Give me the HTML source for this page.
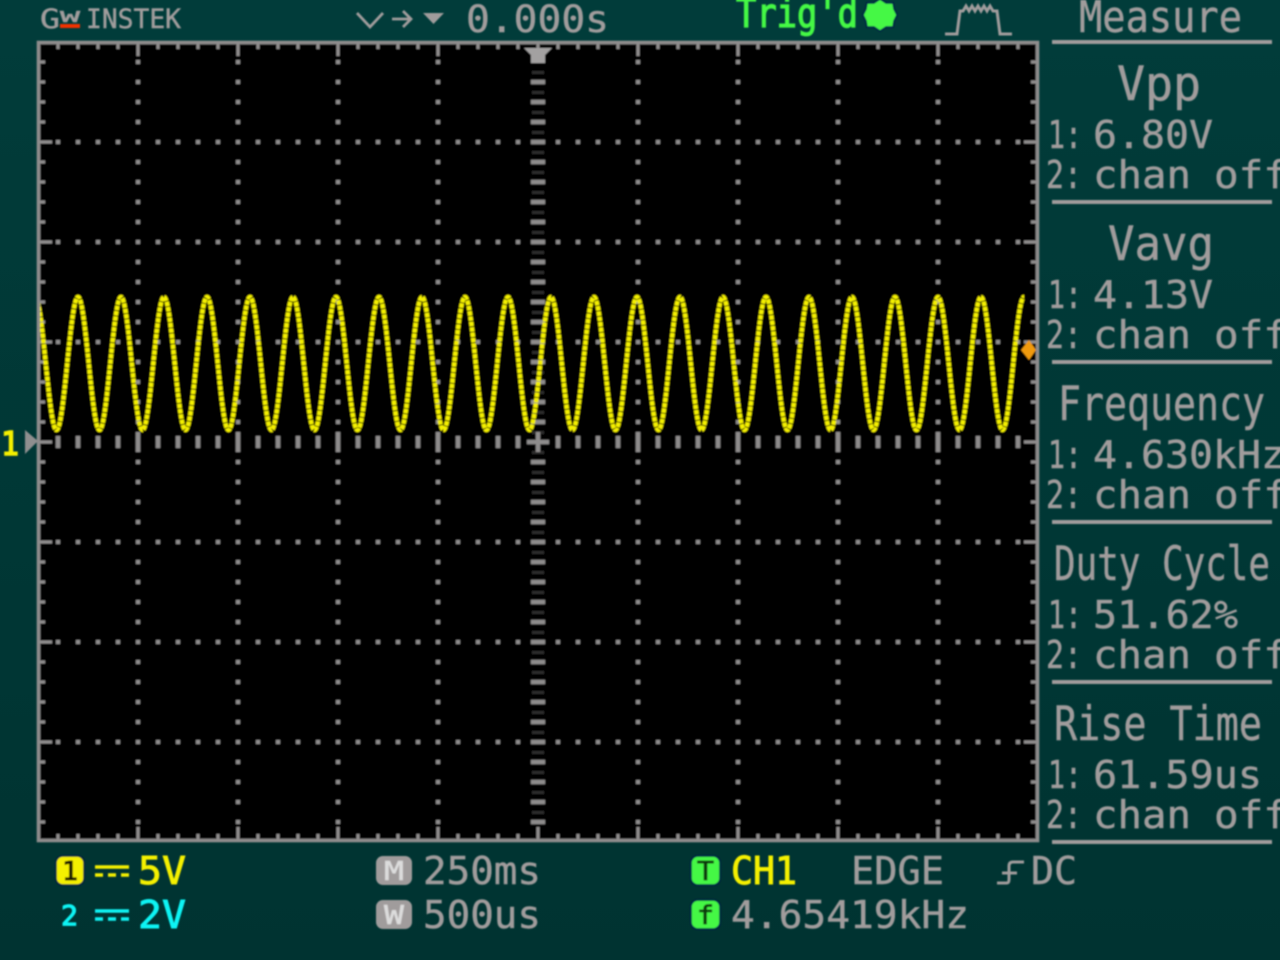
<!DOCTYPE html>
<html><head><meta charset="utf-8"><title>Oscilloscope</title>
<style>
html,body{margin:0;padding:0;background:#013836;width:1280px;height:960px;overflow:hidden}
svg{display:block}
text{font-family:"DejaVu Sans Mono","Liberation Mono",monospace;fill:#a09c9c;stroke:#a09c9c;stroke-width:.45}
.y{fill:#f4f000;stroke:#f4f000}.c{fill:#10f4f4;stroke:#10f4f4}.g{fill:#44f844;stroke:#44f844}
.m{font-size:38px}.t{font-size:47px}.b{font-size:38px}
</style></head><body>
<svg width="1280" height="960" viewBox="0 0 1280 960" xmlns="http://www.w3.org/2000/svg">
<defs>
<linearGradient id="bg" x1="0" y1="0" x2="0" y2="1"><stop offset="0" stop-color="#013c3a"/><stop offset="1" stop-color="#003331"/></linearGradient>
<clipPath id="scr"><rect x="40" y="44" width="996" height="795"/></clipPath>
<filter id="bl" x="-2%" y="-2%" width="104%" height="104%"><feGaussianBlur stdDeviation="0.7"/></filter>
</defs>
<rect width="1280" height="960" fill="url(#bg)"/>
<g filter="url(#bl)">
<rect x="38" y="42" width="1000" height="799" fill="#000"/>
<g stroke="#8e8c8c" fill="none">
<g stroke-width="4" stroke-dasharray="4 16">
<path d="M56 142H1030M56 242H1030M56 342H1030M56 542H1030M56 642H1030M56 742H1030"/>
<path d="M138 60V830M238 60V830M338 60V830M438 60V830M638 60V830M738 60V830M838 60V830M938 60V830"/>
</g>
<g stroke-width="4.5">
<path d="M58 436V448M78 436V448M98 436V448M118 436V448M158 436V448M178 436V448M198 436V448M218 436V448M258 436V448M278 436V448M298 436V448M318 436V448M358 436V448M378 436V448M398 436V448M418 436V448M458 436V448M478 436V448M498 436V448M518 436V448M558 436V448M578 436V448M598 436V448M618 436V448M658 436V448M678 436V448M698 436V448M718 436V448M758 436V448M778 436V448M798 436V448M818 436V448M858 436V448M878 436V448M898 436V448M918 436V448M958 436V448M978 436V448M998 436V448M1018 436V448"/>
<path d="M138 432V452M238 432V452M338 432V452M438 432V452M638 432V452M738 432V452M838 432V452M938 432V452"/>
</g>
<path stroke-width="4.5" d="M527 442H549M538 432V452"/>
<path stroke-width="4.5" d="M531 82H545M531 102H545M531 122H545M531 142H545M531 162H545M531 182H545M531 202H545M531 222H545M531 242H545M531 262H545M531 282H545M531 302H545M531 322H545M531 342H545M531 362H545M531 382H545M531 402H545M531 422H545M531 462H545M531 482H545M531 502H545M531 522H545M531 542H545M531 562H545M531 582H545M531 602H545M531 622H545M531 642H545M531 662H545M531 682H545M531 702H545M531 722H545M531 742H545M531 762H545M531 782H545M531 802H545M531 822H545"/>
<path stroke-width="12" stroke-dasharray="3 17" opacity=".3" d="M538 71V830"/>
<rect x="38.500" y="42.500" width="999" height="798" stroke-width="3.6"/>
<path stroke-width="6" stroke-dasharray="3 17" d="M56.500 46H1036"/>
<path stroke-width="6" stroke-dasharray="3 17" d="M56.500 837H1036"/>
<path stroke-width="6" stroke-dasharray="3 17" d="M42 60.500V838"/>
<path stroke-width="6" stroke-dasharray="3 17" d="M1034 60.500V838"/>
<path stroke-width="14" stroke-dasharray="3 97" d="M136.500 49H1036"/>
<path stroke-width="14" stroke-dasharray="3 97" d="M136.500 834H1036"/>
<path stroke-width="14" stroke-dasharray="3 97" d="M45 140.500V838"/>
<path stroke-width="14" stroke-dasharray="3 97" d="M1031 140.500V838"/>
</g>
<path d="M524 48H552L545 55V63H531V55Z" fill="#a3a1a1"/>
<path clip-path="url(#scr)" fill="none" stroke="#f4f000" stroke-width="4.4" stroke-linejoin="round" stroke-dasharray="4.500 .9" d="M35 297c7.830 0 13.670 133 21.500 133s13.670-133 21.500-133 13.670 133 21.500 133 13.670-133 21.500-133 13.670 133 21.500 133 13.670-133 21.500-133 13.670 133 21.500 133 13.670-133 21.500-133 13.670 133 21.500 133 13.670-133 21.500-133 13.670 133 21.500 133 13.670-133 21.500-133 13.670 133 21.500 133 13.670-133 21.500-133 13.670 133 21.500 133 13.670-133 21.500-133 13.670 133 21.500 133 13.670-133 21.500-133 13.670 133 21.500 133 13.670-133 21.500-133 13.670 133 21.500 133 13.670-133 21.500-133 13.670 133 21.500 133 13.670-133 21.500-133 13.670 133 21.500 133 13.670-133 21.500-133 13.670 133 21.500 133 13.670-133 21.500-133 13.670 133 21.500 133 13.670-133 21.500-133 13.670 133 21.500 133 13.670-133 21.500-133 13.670 133 21.500 133 13.670-133 21.500-133 13.670 133 21.500 133 13.670-133 21.500-133 13.670 133 21.500 133 13.670-133 21.500-133 13.670 133 21.500 133 13.670-133 21.500-133 13.670 133 21.500 133 13.670-133 21.500-133 13.670 133 21.500 133 13.670-133 21.500-133 13.670 133 21.500 133 13.670-133 21.500-133"/>
<path d="M1021 350L1029 340 1036 350 1029 360Z" fill="#f09a10"/>
<path d="M25 430L38 441 25 454V443Z" fill="#8f8f8f"/>
<text x="1" y="455" class="y" font-size="33" textLength="18" lengthAdjust="spacingAndGlyphs" style="stroke-width:1.6">1</text>

<text x="40" y="28" font-size="27" textLength="20" lengthAdjust="spacingAndGlyphs">G</text>
<text x="60" y="22" font-size="15" textLength="20" lengthAdjust="spacingAndGlyphs">W</text>
<rect x="60" y="24" width="20" height="4" fill="#f03000"/>
<text x="86" y="28" font-size="27" textLength="95" lengthAdjust="spacingAndGlyphs">INSTEK</text>
<path d="M357 13L370 27 383 13M392 19H411M403 11L411 19 403 27" fill="none" stroke="#a09c9c" stroke-width="2.8"/>
<path d="M423 13H444L433.500 24Z" fill="#a09c9c"/>
<text x="466" y="32" font-size="37" textLength="143" lengthAdjust="spacingAndGlyphs">0.000s</text>
<text x="736" y="27" class="g" font-size="40" textLength="122" lengthAdjust="spacingAndGlyphs" style="stroke-width:1.3">Trig'd</text>
<path d="M880 -1L886 3 893 3 894 9 897 15 894 21 893 27 886 27 880 31 874 27 867 27 866 21 863 15 866 9 867 3 874 3Z" fill="#44f844" stroke="#001a4a" stroke-width="1.5"/>
<path d="M945 34H957L960 11 963 11 966 6 969 11 972 6 975 11 978 6 981 11 984 6 987 11 990 6 993 11 997 11 1000 34H1012" fill="none" stroke="#a09c9c" stroke-width="3"/>

<text x="1079" y="32" font-size="44" textLength="163" lengthAdjust="spacingAndGlyphs">Measure</text>
<g fill="#a09c9c"><rect x="1052" y="40" width="220" height="4"/><rect x="1052" y="200" width="220" height="4"/><rect x="1052" y="360" width="220" height="4"/><rect x="1052" y="520" width="220" height="4"/><rect x="1052" y="680" width="220" height="4"/><rect x="1052" y="840" width="220" height="4"/></g>

<text x="1117" y="100" class="t" textLength="84" lengthAdjust="spacingAndGlyphs">Vpp</text>
<text x="1048" y="148" class="m" textLength="34" lengthAdjust="spacingAndGlyphs">1:</text><text x="1093" y="148" class="m" textLength="120" lengthAdjust="spacingAndGlyphs">6.80V</text>
<text x="1046" y="188" class="m" textLength="36" lengthAdjust="spacingAndGlyphs">2:</text><text x="1093" y="188" class="m" textLength="98" lengthAdjust="spacingAndGlyphs">chan</text><text x="1214" y="188" class="m" textLength="74" lengthAdjust="spacingAndGlyphs">off</text>
<text x="1108" y="260" class="t" textLength="106" lengthAdjust="spacingAndGlyphs">Vavg</text>
<text x="1048" y="308" class="m" textLength="34" lengthAdjust="spacingAndGlyphs">1:</text><text x="1093" y="308" class="m" textLength="120" lengthAdjust="spacingAndGlyphs">4.13V</text>
<text x="1046" y="348" class="m" textLength="36" lengthAdjust="spacingAndGlyphs">2:</text><text x="1093" y="348" class="m" textLength="98" lengthAdjust="spacingAndGlyphs">chan</text><text x="1214" y="348" class="m" textLength="74" lengthAdjust="spacingAndGlyphs">off</text>
<text x="1058" y="420" class="t" textLength="207" lengthAdjust="spacingAndGlyphs">Frequency</text>
<text x="1048" y="468" class="m" textLength="34" lengthAdjust="spacingAndGlyphs">1:</text><text x="1093" y="468" class="m" textLength="192" lengthAdjust="spacingAndGlyphs">4.630kHz</text>
<text x="1046" y="508" class="m" textLength="36" lengthAdjust="spacingAndGlyphs">2:</text><text x="1093" y="508" class="m" textLength="98" lengthAdjust="spacingAndGlyphs">chan</text><text x="1214" y="508" class="m" textLength="74" lengthAdjust="spacingAndGlyphs">off</text>
<text x="1054" y="580" class="t" textLength="216" lengthAdjust="spacingAndGlyphs">Duty Cycle</text>
<text x="1048" y="628" class="m" textLength="34" lengthAdjust="spacingAndGlyphs">1:</text><text x="1093" y="628" class="m" textLength="145" lengthAdjust="spacingAndGlyphs">51.62%</text>
<text x="1046" y="668" class="m" textLength="36" lengthAdjust="spacingAndGlyphs">2:</text><text x="1093" y="668" class="m" textLength="98" lengthAdjust="spacingAndGlyphs">chan</text><text x="1214" y="668" class="m" textLength="74" lengthAdjust="spacingAndGlyphs">off</text>
<text x="1054" y="740" class="t" textLength="208" lengthAdjust="spacingAndGlyphs">Rise Time</text>
<text x="1048" y="788" class="m" textLength="34" lengthAdjust="spacingAndGlyphs">1:</text><text x="1093" y="788" class="m" textLength="169" lengthAdjust="spacingAndGlyphs">61.59us</text>
<text x="1046" y="828" class="m" textLength="36" lengthAdjust="spacingAndGlyphs">2:</text><text x="1093" y="828" class="m" textLength="98" lengthAdjust="spacingAndGlyphs">chan</text><text x="1214" y="828" class="m" textLength="74" lengthAdjust="spacingAndGlyphs">off</text>

<rect x="56" y="856" width="28" height="29" rx="7" fill="#f4f000" stroke="#001a4a" stroke-width="1.5"/>
<text x="62" y="880" font-size="26" textLength="16" lengthAdjust="spacingAndGlyphs" style="fill:#1a1a00;stroke:#1a1a00;stroke-width:1">1</text>
<path d="M95 867H129" stroke="#f4f000" stroke-width="3.4"/>
<path d="M95 875H129" stroke="#f4f000" stroke-width="3.4" stroke-dasharray="8 5"/>
<text x="138" y="884" class="y b" textLength="48" lengthAdjust="spacingAndGlyphs" style="stroke-width:.9">5V</text>
<text x="61" y="925" class="c" font-size="28" textLength="17" lengthAdjust="spacingAndGlyphs" style="stroke-width:1.2">2</text>
<path d="M95 911H129" stroke="#10f4f4" stroke-width="3.4"/>
<path d="M95 919H129" stroke="#10f4f4" stroke-width="3.4" stroke-dasharray="8 5"/>
<text x="138" y="928" class="c b" textLength="48" lengthAdjust="spacingAndGlyphs" style="stroke-width:.9">2V</text>

<rect x="376" y="856" width="36" height="29" rx="7" fill="#a09c9c"/>
<text x="384" y="880" font-size="26" textLength="20" lengthAdjust="spacingAndGlyphs" style="fill:#dcdcdc;stroke:#dcdcdc">M</text>
<text x="423" y="884" class="b" textLength="118" lengthAdjust="spacingAndGlyphs">250ms</text>
<rect x="376" y="900" width="36" height="29" rx="7" fill="#a09c9c"/>
<text x="384" y="924" font-size="26" textLength="20" lengthAdjust="spacingAndGlyphs" style="fill:#dcdcdc;stroke:#dcdcdc">W</text>
<text x="423" y="928" class="b" textLength="118" lengthAdjust="spacingAndGlyphs">500us</text>

<rect x="691" y="856" width="29" height="29" rx="7" fill="#44f844" stroke="#001a4a" stroke-width="1.5"/>
<text x="697" y="880" font-size="26" textLength="17" lengthAdjust="spacingAndGlyphs" style="fill:#0a3a0a;stroke:#0a3a0a;stroke-width:.8">T</text>
<text x="731" y="884" class="y b" textLength="66" lengthAdjust="spacingAndGlyphs" style="stroke-width:1">CH1</text>
<text x="851" y="884" class="b" textLength="93" lengthAdjust="spacingAndGlyphs">EDGE</text>
<path d="M997 883H1007Q1009 883 1009 879V866Q1009 862 1013 862H1024M1002 873H1017" fill="none" stroke="#a09c9c" stroke-width="3"/>
<text x="1031" y="884" class="b" textLength="46" lengthAdjust="spacingAndGlyphs">DC</text>
<rect x="691" y="900" width="29" height="29" rx="7" fill="#44f844" stroke="#001a4a" stroke-width="1.5"/>
<text x="697" y="924" font-size="26" textLength="17" lengthAdjust="spacingAndGlyphs" style="fill:#0a3a0a;stroke:#0a3a0a;stroke-width:.8">f</text>
<text x="731" y="928" class="b" textLength="238" lengthAdjust="spacingAndGlyphs">4.65419kHz</text>
</g>
</svg>
</body></html>
